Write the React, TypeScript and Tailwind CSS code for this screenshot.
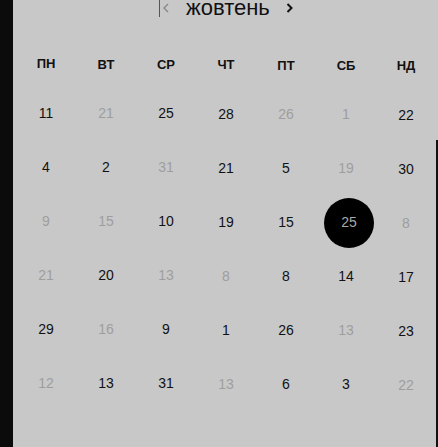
import React from "react";

// g = grey (other month), s = selected
type Day = { n: number; g?: boolean; s?: boolean };

const weekDays = ["ПН", "ВТ", "СР", "ЧТ", "ПТ", "СБ", "НД"];

const weeks: Day[][] = [
  [{ n: 11 }, { n: 21, g: true }, { n: 25 }, { n: 28 }, { n: 26, g: true }, { n: 1, g: true }, { n: 22 }],
  [{ n: 4 }, { n: 2 }, { n: 31, g: true }, { n: 21 }, { n: 5 }, { n: 19, g: true }, { n: 30 }],
  [{ n: 9, g: true }, { n: 15, g: true }, { n: 10 }, { n: 19 }, { n: 15 }, { n: 25, s: true }, { n: 8, g: true }],
  [{ n: 21, g: true }, { n: 20 }, { n: 13, g: true }, { n: 8, g: true }, { n: 8 }, { n: 14 }, { n: 17 }],
  [{ n: 29 }, { n: 16, g: true }, { n: 9 }, { n: 1 }, { n: 26 }, { n: 13, g: true }, { n: 23 }],
  [{ n: 12, g: true }, { n: 13 }, { n: 31 }, { n: 13, g: true }, { n: 6 }, { n: 3 }, { n: 22, g: true }],
];

// the photo is slightly tilted, columns on the right sit a bit lower
const colShift = ["pt-0", "pt-[1px]", "pt-[1px]", "pt-[2px]", "pt-[3px]", "pt-[3px]", "pt-[4px]"];

const DayCell = ({ day, col }: { day: Day; col: number }) => (
  <div className={`flex h-[54px] items-center justify-center ${colShift[col]}`}>
    {day.s ? (
      <span className="ml-[6px] flex h-[50px] w-[50px] items-center justify-center rounded-full bg-black text-[14px] text-[#a8a8a8]">
        {day.n}
      </span>
    ) : (
      <span className={`text-[14px] ${day.g ? "text-[#9e9e9e]" : "text-[#111]"}`}>{day.n}</span>
    )}
  </div>
);

export default function App() {
  return (
    <div className="flex h-[447px] w-[438px] bg-black" style={{ fontFamily: '"Liberation Sans", Arial, sans-serif' }}>
      <div className="w-[13px] bg-[#0b0b0b]" />
      <div className="flex-1 bg-[#c8c8c8] pl-[3px]">
        <div className="flex h-[20px] items-start">
          <div className="ml-[143px] h-[17px] w-px bg-[#555]" />
          <svg className="ml-[2px] mt-[3px]" width="7" height="10" viewBox="0 0 7 10" fill="none">
            <path d="M6 1 L2 5 L6 9" stroke="#888" strokeWidth="1.4" />
          </svg>
          <span className="-mt-[2px] ml-[17px] text-[22px] leading-[20px] text-[#111]">жовтень</span>
          <svg className="ml-[16px] mt-[3px]" width="7" height="10" viewBox="0 0 7 10" fill="none">
            <path d="M1.5 1 L5.5 5 L1.5 9" stroke="#111" strokeWidth="2" />
          </svg>
        </div>

        <div className="mt-[32px] grid h-[20px] w-[420px] grid-cols-7">
          {weekDays.map((d, i) => (
            <div key={d} className={`flex items-center justify-center text-[13px] font-bold text-[#111] ${colShift[i]}`}>
              {d}
            </div>
          ))}
        </div>

        <div className="mt-[14px] grid w-[420px] grid-cols-7">
          {weeks.map((week, r) =>
            week.map((day, c) => <DayCell key={`${r}-${c}`} day={day} col={c} />)
          )}
        </div>
      </div>
      <div className="flex w-[2px] flex-col">
        <div className="h-[140px] bg-[#c8c8c8]" />
        <div className="flex-1 bg-[#111]" />
      </div>
    </div>
  );
}
